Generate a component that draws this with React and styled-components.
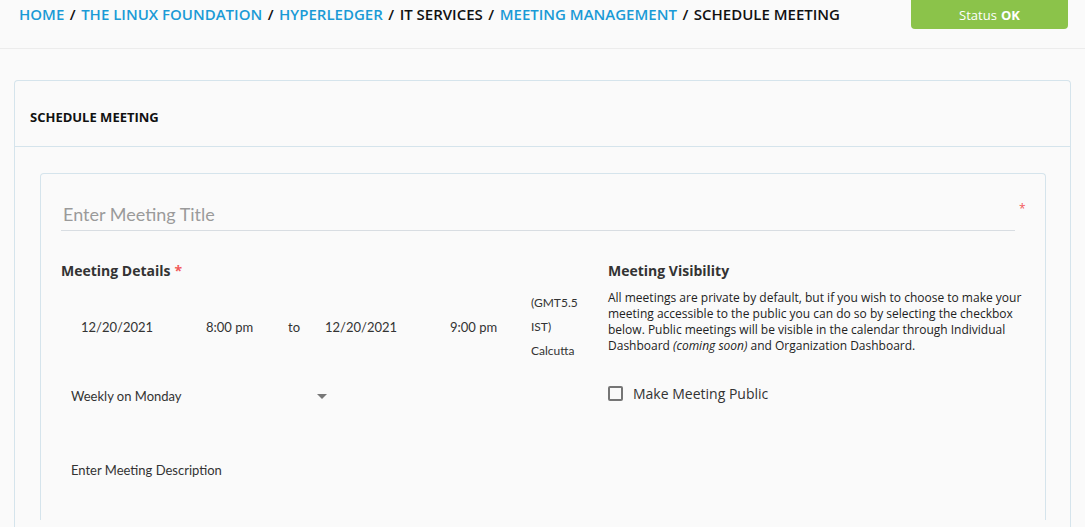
import React from "react"
import styled, { createGlobalStyle } from "styled-components"

const GlobalStyle = createGlobalStyle`
    html, body {
        margin: 0;
        padding: 0;
        background: #fafafa;
        font-family: "Open Sans", "Liberation Sans", sans-serif;
        color: #222;
    }
    * {
        box-sizing: border-box;
    }
`

const TopBar = styled.header`
    height: 49px;
    border-bottom: 1px solid #ececec;
    display: flex;
    justify-content: space-between;
    align-items: flex-start;
    padding: 0 17px 0 19px;
`

const Crumbs = styled.nav`
    display: flex;
    align-items: center;
    gap: 5.5px;
    padding-top: 3px;
    font-size: 15px;
    line-height: 22px;
    font-weight: 600;
    text-transform: uppercase;
    color: #111;
`

const Crumb = styled.a`
    color: ${(p) => (p.$current ? "#111" : "#1b9ad6")};
    text-decoration: none;
`

const StatusButton = styled.button`
    width: 157px;
    height: 29px;
    border: none;
    border-radius: 0 0 4px 4px;
    background: #8bc34a;
    color: #fff;
    font-family: "Open Sans", "Liberation Sans", sans-serif;
    font-size: 13px;
    b {
        font-weight: 700;
        margin-left: 4px;
    }
`

const Main = styled.main`
    padding: 31px 14px 0;
`

const Card = styled.section`
    border: 1px solid #d5e4ec;
    border-bottom: none;
    border-radius: 4px 4px 0 0;
    min-height: 460px;
`

const CardHeader = styled.div`
    height: 66px;
    padding: 27px 15px 0;
    border-bottom: 1px solid #d5e4ec;
    font-size: 13px;
    line-height: 18px;
    font-weight: 700;
    text-transform: uppercase;
    color: #111;
`

const CardBody = styled.div`
    padding: 26px 24px 0 25px;
`

const InnerCard = styled.div`
    border: 1px solid #d5e4ec;
    border-bottom: none;
    border-radius: 4px 4px 0 0;
    padding: 17px 0 40px 20px;
`

const TitleRow = styled.div`
    display: flex;
    align-items: flex-start;
`

const TitleInput = styled.input`
    flex: 1;
    height: 40px;
    border: none;
    border-bottom: 1px solid #d8dde2;
    background: transparent;
    padding: 6px 2px 0;
    font-family: "Lato", "Noto Sans", sans-serif;
    font-size: 18px;
    color: #333;
    outline: none;
    &::placeholder {
        color: #9a9a9a;
    }
`

const Required = styled.span`
    color: #f25a5a;
    font-size: ${(p) => (p.$small ? "12px" : "14px")};
    margin-left: ${(p) => (p.$small ? "0" : "4px")};
    width: ${(p) => (p.$small ? "30px" : "auto")};
    padding-left: ${(p) => (p.$small ? "4px" : "0")};
    padding-top: ${(p) => (p.$small ? "12px" : "0")};
    line-height: 1;
`

const Columns = styled.div`
    display: flex;
    margin-top: 30px;
`

const LeftCol = styled.div`
    width: 547px;
    flex-shrink: 0;
`

const RightCol = styled.div`
    flex: 1;
    padding-right: 18px;
`

const Heading = styled.h3`
    margin: 0;
    font-size: 14px;
    line-height: 20px;
    font-weight: 700;
    color: #333;
`

const DateRow = styled.div`
    display: flex;
    align-items: center;
    margin-top: 10px;
    font-family: "Lato", "Noto Sans", sans-serif;
    font-size: 13px;
    color: #333;
`

const Field = styled.div`
    width: ${(p) => p.$w}px;
    padding-left: 20px;
    flex-shrink: 0;
`

const TimeZone = styled.div`
    width: 72px;
    padding-left: 20px;
    font-size: 12px;
    line-height: 24px;
`

const Select = styled.div`
    display: flex;
    align-items: center;
    justify-content: space-between;
    width: 272px;
    height: 40px;
    margin-top: 13px;
    padding: 0 6px 0 10px;
    font-family: "Lato", "Noto Sans", sans-serif;
    font-size: 13px;
    color: #333;
`

const Caret = styled.span`
    width: 0;
    height: 0;
    border-left: 5px solid transparent;
    border-right: 5px solid transparent;
    border-top: 5px solid #777;
`

const Description = styled.div`
    margin-top: 44px;
    padding-left: 10px;
    font-family: "Lato", "Noto Sans", sans-serif;
    font-size: 13px;
    line-height: 20px;
    color: #333;
`

const Paragraph = styled.p`
    margin: 9px 0 0;
    font-size: 12px;
    line-height: 16px;
    color: #222;
`

const CheckRow = styled.label`
    display: flex;
    align-items: center;
    gap: 10px;
    margin-top: 30px;
    font-size: 14px;
    color: #333;
`

const Box = styled.span`
    width: 15px;
    height: 15px;
    border: 2px solid #757575;
    border-radius: 2px;
`

export default function App() {
    return (
        <>
            <GlobalStyle />
            <TopBar>
                <Crumbs>
                    <Crumb href="#">Home</Crumb>/
                    <Crumb href="#">The Linux Foundation</Crumb>/
                    <Crumb href="#">Hyperledger</Crumb>/
                    <Crumb $current>IT Services</Crumb>/
                    <Crumb href="#">Meeting Management</Crumb>/
                    <Crumb $current>Schedule Meeting</Crumb>
                </Crumbs>
                <StatusButton>
                    Status<b>OK</b>
                </StatusButton>
            </TopBar>
            <Main>
                <Card>
                    <CardHeader>Schedule Meeting</CardHeader>
                    <CardBody>
                        <InnerCard>
                            <TitleRow>
                                <TitleInput placeholder="Enter Meeting Title" />
                                <Required $small>*</Required>
                            </TitleRow>
                            <Columns>
                                <LeftCol>
                                    <Heading>
                                        Meeting Details<Required>*</Required>
                                    </Heading>
                                    <DateRow>
                                        <Field $w={125}>12/20/2021</Field>
                                        <Field $w={82}>8:00 pm</Field>
                                        <Field $w={37}>to</Field>
                                        <Field $w={125}>12/20/2021</Field>
                                        <Field $w={81}>9:00 pm</Field>
                                        <TimeZone>(GMT5.5 IST) Calcutta</TimeZone>
                                    </DateRow>
                                    <Select>
                                        Weekly on Monday
                                        <Caret />
                                    </Select>
                                    <Description>Enter Meeting Description</Description>
                                </LeftCol>
                                <RightCol>
                                    <Heading>Meeting Visibility</Heading>
                                    <Paragraph>
                                        All meetings are private by default, but if you wish to
                                        choose to make your meeting accessible to the public you
                                        can do so by selecting the checkbox below. Public meetings
                                        will be visible in the calendar through Individual
                                        Dashboard <i>(coming soon)</i> and Organization Dashboard.
                                    </Paragraph>
                                    <CheckRow>
                                        <Box />
                                        Make Meeting Public
                                    </CheckRow>
                                </RightCol>
                            </Columns>
                        </InnerCard>
                    </CardBody>
                </Card>
            </Main>
        </>
    )
}
